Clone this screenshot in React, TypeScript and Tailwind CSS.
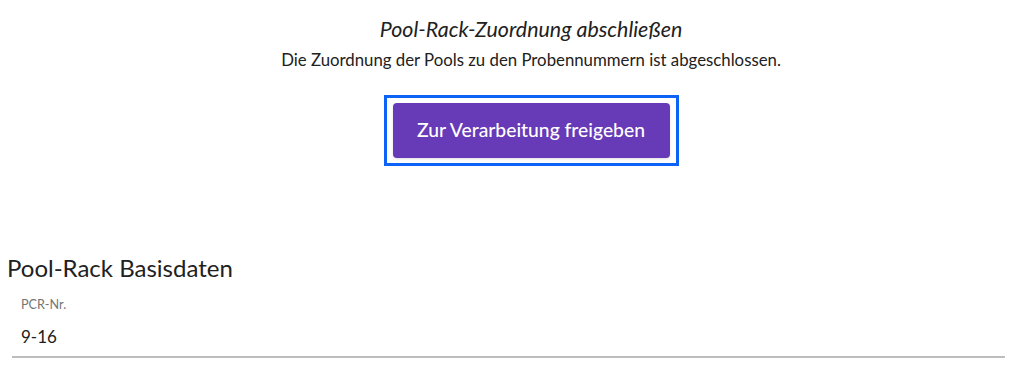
export default function App() {
  return (
    <div className="w-[1024px] h-[369px] bg-white overflow-hidden font-['Lato','Liberation_Sans',sans-serif] text-[#212121]">
      {/* Completion section */}
      <div className="pl-[38px] pt-[14px] flex flex-col items-center">
        <h2 className="text-[21.4px] italic leading-[30px]">Pool-Rack-Zuordnung abschließen</h2>
        <p className="text-[16.8px] leading-[22px] mt-[5px]">Die Zuordnung der Pools zu den Probennummern ist abgeschlossen.</p>
        <div className="mt-[24px] border-[3px] border-[#0d63f5] px-[6px] py-[5px]">
          <button className="w-[277px] h-[55px] rounded-[4px] bg-[#673ab7] text-white text-[19.3px] font-medium shadow-sm">
            Zur Verarbeitung freigeben
          </button>
        </div>
      </div>

      {/* Basisdaten */}
      <div className="mt-[87px] px-[7px]">
        <h3 className="text-[24px] leading-[30px]">Pool-Rack Basisdaten</h3>
        <div className="ml-[5px] mr-[12px] mt-[15px] border-b-2 border-[#bdbdbd]">
          <div className="pl-[9px] text-[12.6px] leading-[14px] text-[#757575]">PCR-Nr.</div>
          <div className="pl-[9px] pt-[14px] pb-[8px] text-[17px] leading-[22px]">9-16</div>
        </div>
      </div>
    </div>
  )
}
